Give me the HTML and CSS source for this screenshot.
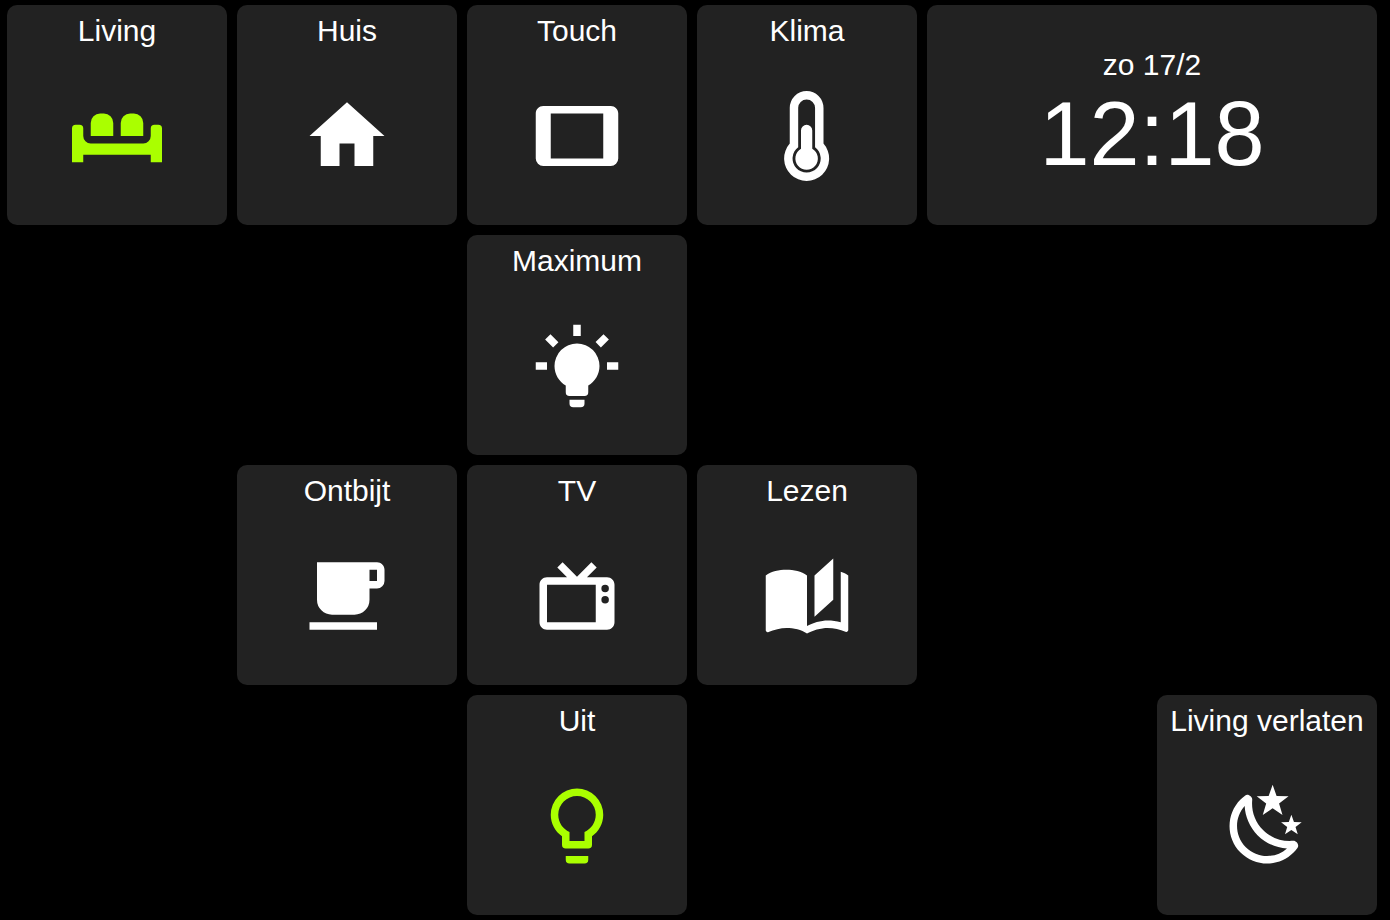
FILE: index.html
```html
<!DOCTYPE html>
<html lang="nl">
<head>
<meta charset="utf-8">
<meta name="viewport" content="width=device-width, initial-scale=1">
<title>Living</title>
<link rel="stylesheet" href="styles.css">
</head>
<body>
<main class="dashboard">
  <button type="button" class="tile col-1 row-1 active">
    <span class="label">Living</span>
    <svg class="icon" viewBox="0 0 24 24" aria-hidden="true"><path d="M0,19V10A1,1 0 0,1 1,9H2A1,1 0 0,1 3,10V12A2,2 0 0,0 5,14H19A2,2 0 0,0 21,12V10A1,1 0 0,1 22,9H23A1,1 0 0,1 24,10V19H21V17H3V19ZM5,12V8.5A2.5,2.5 0 0,1 7.5,6H8.5A2.5,2.5 0 0,1 11,8.5V12ZM13,12V8.5A2.5,2.5 0 0,1 15.5,6H16.5A2.5,2.5 0 0,1 19,8.5V12Z"/></svg>
  </button>
  <button type="button" class="tile col-2 row-1">
    <span class="label">Huis</span>
    <svg class="icon" viewBox="0 0 24 24" aria-hidden="true"><path d="M10,20V14H14V20H19V12H22L12,3L2,12H5V20H10Z"/></svg>
  </button>
  <button type="button" class="tile col-3 row-1">
    <span class="label">Touch</span>
    <svg class="icon" viewBox="0 0 24 24" aria-hidden="true"><path d="M19,18H5V6H19M21,4H3C1.89,4 1,4.89 1,6V18A2,2 0 0,0 3,20H21A2,2 0 0,0 23,18V6C23,4.89 22.1,4 21,4Z"/></svg>
  </button>
  <button type="button" class="tile col-4 row-1">
    <span class="label">Klima</span>
    <svg class="icon" viewBox="0 0 24 24" aria-hidden="true"><path fill-rule="evenodd" d="M7.4,4.5A4.5,4.5 0 0,1 16.4,4.5V14.03A6,6 0 1,1 7.4,14.03ZM9.65,4.5V15A3.75,3.75 0 1,0 14.15,15V4.5A2.25,2.25 0 0,0 9.65,4.5Z"/><path d="M10.4,10.5A1.5,1.5 0 0,1 13.4,10.5V15.4A3,3 0 1,1 10.4,15.4Z"/></svg>
  </button>
  <section class="tile clock row-1">
    <time class="date">zo 17/2</time>
    <time class="time">12:18</time>
  </section>

  <button type="button" class="tile col-3 row-2">
    <span class="label">Maximum</span>
    <svg class="icon" viewBox="0 0 24 24" aria-hidden="true"><path d="M12,6A6,6 0 0,1 18,12C18,14.22 16.79,16.16 15,17.2V19A1,1 0 0,1 14,20H10A1,1 0 0,1 9,19V17.2C7.21,16.16 6,14.22 6,12A6,6 0 0,1 12,6M14,21V22A1,1 0 0,1 13,23H11A1,1 0 0,1 10,22V21H14M20,11H23V13H20V11M1,11H4V13H1V11M13,1V4H11V1H13M4.92,3.5L7.05,5.64L5.63,7.05L3.5,4.93L4.92,3.5M16.95,5.63L19.07,3.5L20.5,4.93L18.37,7.05L16.95,5.63Z"/></svg>
  </button>

  <button type="button" class="tile col-2 row-3">
    <span class="label">Ontbijt</span>
    <svg class="icon" viewBox="0 0 24 24" aria-hidden="true"><path d="M2,21H20V19H2M20,8H18V5H20M20,3H4V13A4,4 0 0,0 8,17H14A4,4 0 0,0 18,13V10H20A2,2 0 0,0 22,8V5C22,3.89 21.1,3 20,3Z"/></svg>
  </button>
  <button type="button" class="tile col-3 row-3">
    <span class="label">TV</span>
    <svg class="icon" viewBox="0 0 24 24" aria-hidden="true"><path fill-rule="evenodd" d="M8.16,3L6.75,4.41L9.34,7H4C2.89,7 2,7.89 2,9V19C2,20.11 2.89,21 4,21H20C21.11,21 22,20.11 22,19V9C22,7.89 21.11,7 20,7H14.66L17.25,4.41L15.84,3L12,6.84L8.16,3M4,9H17V19H4V9M19.5,9A1,1 0 0,1 20.5,10A1,1 0 0,1 19.5,11A1,1 0 0,1 18.5,10A1,1 0 0,1 19.5,9M19.5,12A1,1 0 0,1 20.5,13A1,1 0 0,1 19.5,14A1,1 0 0,1 18.5,13A1,1 0 0,1 19.5,12Z"/></svg>
  </button>
  <button type="button" class="tile col-4 row-3">
    <span class="label">Lezen</span>
    <svg class="icon" viewBox="0 0 24 24" aria-hidden="true"><path d="M19,2L14,6.5V17.5L19,13V2M6.5,5C4.55,5 2.45,5.4 1,6.5V21.16C1,21.41 1.25,21.66 1.5,21.66C1.6,21.66 1.65,21.59 1.75,21.59C3.1,20.94 5.05,20.5 6.5,20.5C8.45,20.5 10.55,20.9 12,22C13.35,21.15 15.8,20.5 17.5,20.5C19.15,20.5 20.85,20.81 22.25,21.56C22.35,21.61 22.4,21.59 22.5,21.59C22.75,21.59 23,21.34 23,21.09V6.5C22.4,6.05 21.75,5.75 21,5.5V19C19.9,18.65 18.7,18.5 17.5,18.5C15.8,18.5 13.35,19.15 12,20V6.5C10.55,5.4 8.45,5 6.5,5Z"/></svg>
  </button>

  <button type="button" class="tile col-3 row-4 active">
    <span class="label">Uit</span>
    <svg class="icon" viewBox="0 0 24 24" aria-hidden="true"><path d="M12,2A7,7 0 0,1 19,9C19,11.38 17.81,13.47 16,14.74V17A1,1 0 0,1 15,18H9A1,1 0 0,1 8,17V14.74C6.19,13.47 5,11.38 5,9A7,7 0 0,1 12,2M9,21V20H15V21A1,1 0 0,1 14,22H10A1,1 0 0,1 9,21M12,4A5,5 0 0,0 7,9C7,11.05 8.23,12.81 10,13.58V16H14V13.58C15.77,12.81 17,11.05 17,9A5,5 0 0,0 12,4Z"/></svg>
  </button>
  <button type="button" class="tile col-6 row-4">
    <span class="label">Living verlaten</span>
    <svg class="icon" viewBox="0 0 24 24" aria-hidden="true"><path d="M17.75,4.09L15.22,6.03L16.13,9.09L13.5,7.28L10.87,9.09L11.78,6.03L9.25,4.09L12.44,4L13.5,1L14.56,4L17.75,4.09M21.25,11L19.61,12.25L20.2,14.23L18.5,13.06L16.8,14.23L17.39,12.25L15.75,11L17.81,10.95L18.5,9L19.19,10.95L21.25,11M18.97,15.95C19.8,15.87 20.69,17.05 20.16,17.8C19.84,18.25 19.5,18.67 19.08,19.07C15.17,23 8.84,23 4.94,19.07C1.03,15.17 1.03,8.83 4.94,4.93C5.34,4.53 5.76,4.17 6.21,3.85C6.96,3.32 8.14,4.21 8.06,5.04C7.79,7.9 8.75,10.87 10.95,13.06C13.14,15.26 16.1,16.22 18.97,15.95M17.33,17.97C14.5,17.81 11.7,16.64 9.53,14.5C7.36,12.31 6.2,9.5 6.04,6.68C3.23,9.82 3.34,14.64 6.35,17.66C9.37,20.67 14.19,20.78 17.33,17.97Z"/></svg>
  </button>
</main>
</body>
</html>
```
FILE: styles.css
```css
* {
  box-sizing: border-box;
}

body {
  margin: 0;
  background: #000;
  color: #fff;
  font-family: "Liberation Sans", Arial, sans-serif;
  font-size: 30px;
  line-height: 34px;
}

.dashboard {
  display: grid;
  grid-template-columns: repeat(6, minmax(0, 1fr));
  grid-auto-rows: minmax(220px, auto);
  gap: 10px;
  padding: 5px 13px 5px 7px;
}

.tile {
  display: flex;
  flex-direction: column;
  align-items: center;
  justify-content: flex-start;
  gap: 43px;
  margin: 0;
  padding: 9px 0;
  border: 0;
  border-radius: 10px;
  background: #222;
  color: inherit;
  font: inherit;
}

button.tile {
  cursor: pointer;
}

.icon {
  width: 90px;
  height: 90px;
  fill: #fff;
}

.active .icon {
  fill: #af0;
}

.clock {
  grid-column: 5 / span 2;
  justify-content: center;
  gap: 0;
  padding: 2px 0 0;
}

.date {
  line-height: 36px;
}

.time {
  font-size: 90px;
  line-height: 102px;
}

.col-1 { grid-column: 1; }
.col-2 { grid-column: 2; }
.col-3 { grid-column: 3; }
.col-4 { grid-column: 4; }
.col-6 { grid-column: 6; }

.row-1 { grid-row: 1; }
.row-2 { grid-row: 2; }
.row-3 { grid-row: 3; }
.row-4 { grid-row: 4; }
```
